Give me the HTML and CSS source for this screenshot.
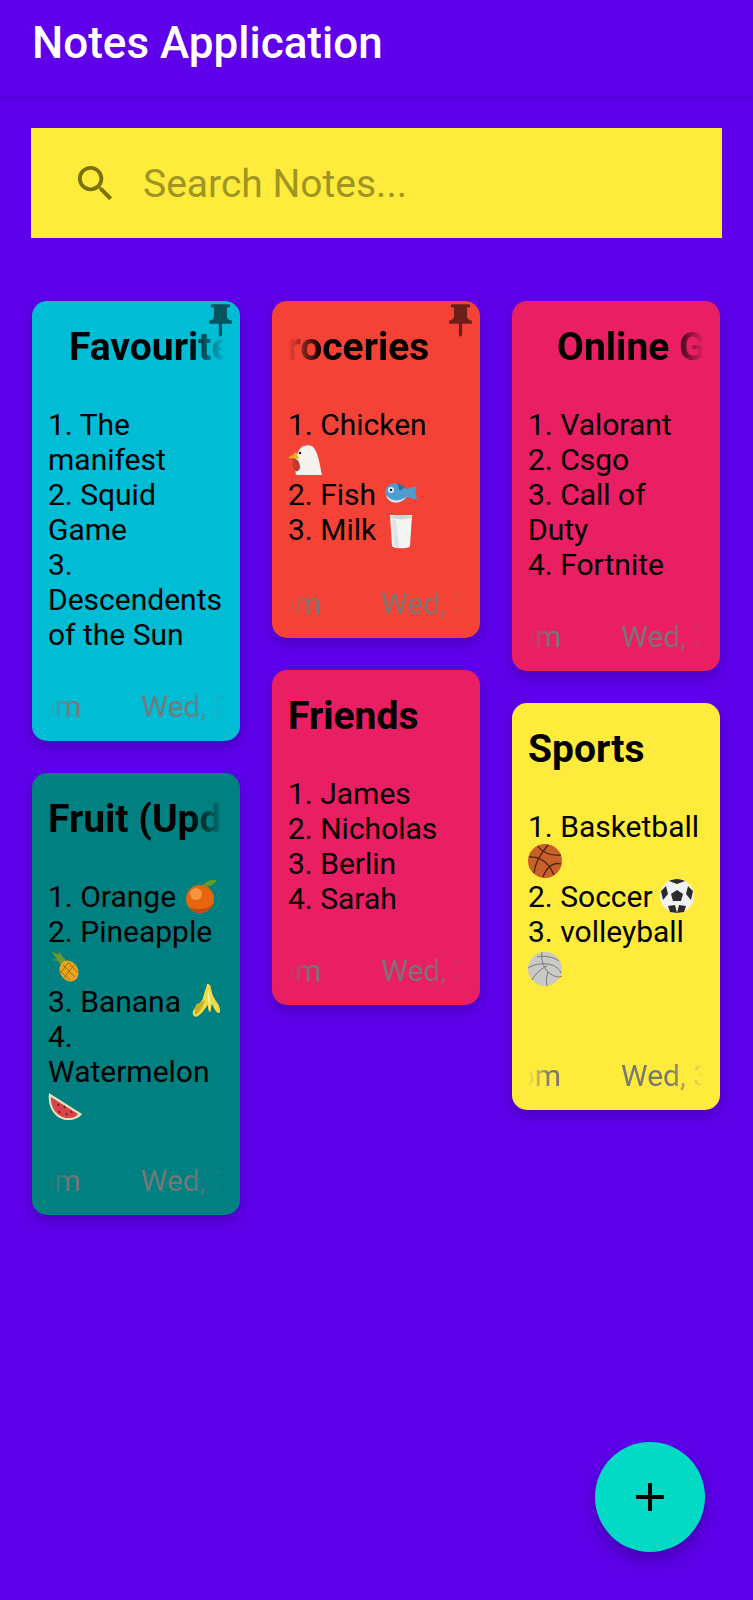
FILE: index.html
```html
<!DOCTYPE html>
<html>
<head>
	<title>Notes Application</title>
	<meta charset="utf-8">
	<link rel="stylesheet" href="styles.css">
</head>
<body>

	<header class="top-bar">
		<h1>Notes Application</h1>
	</header>

	<div class="search">
		<svg class="search-icon" viewBox="0 0 24 24"><path d="M15.5 14h-.79l-.28-.27C15.41 12.59 16 11.11 16 9.5 16 5.91 13.09 3 9.5 3S3 5.91 3 9.5 5.91 16 9.5 16c1.61 0 3.09-.59 4.23-1.57l.27.28v.79l5 4.99L20.49 19l-4.99-5zm-6 0C7.01 14 5 11.99 5 9.5S7.01 5 9.5 5 14 7.01 14 9.5 11.99 14 9.5 14z"/></svg>
		<span class="search-text">Search Notes...</span>
	</div>

	<main class="notes">

		<div class="col">
			<div class="card cyan">
				<svg class="pin" viewBox="0 0 24 24"><path d="M16 9V4h1c.55 0 1-.45 1-1s-.45-1-1-1H7c-.55 0-1 .45-1 1s.45 1 1 1h1v5c0 1.66-1.34 3-3 3v2h5.97v7l1 1 1-1v-7H19v-2c-1.66 0-3-1.34-3-3z"/></svg>
				<div class="title fade-right"><span class="in-21">Favourites</span></div>
				<p class="body">1. The manifest<br>2. Squid Game<br>3. Descendents of the Sun</p>
				<div class="foot"><span class="time"><span>7:30 pm</span></span><span class="date">Wed, 3 Nov</span></div>
			</div>

			<div class="card teal">
				<div class="title fade-right"><span>Fruit (Updated)</span></div>
				<p class="body">1. Orange
					<svg class="emo" viewBox="0 0 34 34"><path d="M18 8C20 3 26 0 33 1 30 6 24 9 18 8z" fill="#5f9a2c"/><circle cx="16" cy="20" r="14" fill="#e8650f"/><circle cx="12" cy="15" r="6" fill="#f6953f"/><path d="M16 34a14 14 0 0 0 13-9c-5 5-15 7-24 3a14 14 0 0 0 11 6z" fill="#c04c0a"/></svg><br>
					2. Pineapple
					<svg class="emo" viewBox="0 0 34 34"><path d="M3 2l8 4-1-5 5 7 3 3-5 5-3-4-6-1 5-1z" fill="#6d9a2a"/><ellipse cx="21" cy="22" rx="9" ry="11" transform="rotate(-32 21 22)" fill="#e8a51e"/><path d="M15 16l12 12M12 22l10 9M20 13l10 11M26 16L15 30M21 13L11 26" stroke="#a86c10" stroke-width="1"/></svg><br>
					3. Banana
					<svg class="emo" viewBox="0 0 34 34"><path d="M19 0c3 0 4 2 4 5 1 6 4 11 7 15 2 3 3 9 1 9-3 0-5-5-7-9-1 3-1 8-2 8-2-1-2-5-2-7-3 3-6 9-10 11-4 2-6-1-5-5 2-5 8-7 10-13 1-5 3-9 4-14z" fill="#f4d949"/><path d="M9 20c3-1 6-3 8-4-1 6-6 13-10 15 0-4-1-8 2-11z" fill="#c9b021"/><path d="M20 6c-1 6 0 14 2 20 0-6 0-14-2-20z" fill="#fff3a5"/></svg><br>
					4. Watermelon
					<svg class="emo low-2" viewBox="0 0 34 34"><path d="M1 1C-1 16 8 28 20 28 26 28 31 26 34 22Z" fill="#e9e4b8"/><path d="M3 5C2 16 10 26 20 26 25 26 28 25 30 22Z" fill="#d8434c"/><path d="M10 12l1 2M16 14l1 2M11 19l1 2M18 21l1 2M23 19l1 2" stroke="#5c1f1f" stroke-width="1.5"/></svg>
				</p>
				<div class="foot"><span class="time"><span>7:30 pm</span></span><span class="date">Wed, 3 Nov</span></div>
			</div>
		</div>

		<div class="col">
			<div class="card red">
				<svg class="pin" viewBox="0 0 24 24"><path d="M16 9V4h1c.55 0 1-.45 1-1s-.45-1-1-1H7c-.55 0-1 .45-1 1s.45 1 1 1h1v5c0 1.66-1.34 3-3 3v2h5.97v7l1 1 1-1v-7H19v-2c-1.66 0-3-1.34-3-3z"/></svg>
				<div class="title fade-left"><span class="out-end">Groceries</span></div>
				<p class="body">1. Chicken
					<svg class="emo" viewBox="0 0 34 34"><path d="M8 33C6 18 9 3 20 3 29 3 31 18 34 33Z" fill="#f6f3ee"/><path d="M0 16l8-6 3 7z" fill="#efae1b"/><path d="M5 17c4-1 7 3 7 9-1 4-5 4-6 1-1-2-2-6-1-10z" fill="#c23a2c"/><circle cx="12" cy="11" r="1.3" fill="#222"/><path d="M13 4l2-3 2 2 2-3 2 3 3 0" fill="#e8504a"/></svg><br>
					2. Fish
					<svg class="emo" viewBox="0 0 34 34"><path d="M1 15C2 6 13 3 22 12L33 9C31 13 31 19 34 23L23 20C16 28 2 25 1 15Z" fill="#4f9ccf"/><path d="M2 18C7 25 17 25 23 19 17 29 4 27 2 18Z" fill="#d8e6ef"/><circle cx="7" cy="13" r="3" fill="#e8eef2"/><circle cx="7" cy="13" r="1.3" fill="#1c2a36"/><path d="M13 6l8 4-5 4z" fill="#2c6ea3"/></svg><br>
					3. Milk
					<svg class="emo low-2" viewBox="0 0 34 34"><path d="M6 0h22l-2 31c0 3-17 3-18 0z" fill="#f3f5f4"/><ellipse cx="17" cy="2" rx="11" ry="2.2" fill="#cfd6d4"/><path d="M8 4l2 27c2 1 4 1 5 1L12 5z" fill="#dfe4e2"/></svg>
				</p>
				<div class="foot"><span class="time"><span>7:30 pm</span></span><span class="date">Wed, 3 Nov</span></div>
			</div>

			<div class="card pink">
				<div class="title"><span>Friends</span></div>
				<p class="body">1. James<br>2. Nicholas<br>3. Berlin<br>4. Sarah</p>
				<div class="foot"><span class="time"><span>7:30 pm</span></span><span class="date">Wed, 3 Nov</span></div>
			</div>
		</div>

		<div class="col">
			<div class="card pink">
				<div class="title fade-right"><span class="in-29">Online Games</span></div>
				<p class="body">1. Valorant<br>2. Csgo<br>3. Call of Duty<br>4. Fortnite</p>
				<div class="foot"><span class="time"><span>7:30 pm</span></span><span class="date">Wed, 3 Nov</span></div>
			</div>

			<div class="card yellow">
				<div class="title"><span>Sports</span></div>
				<p class="body">1. Basketball
					<svg class="emo" viewBox="0 0 34 34"><circle cx="17" cy="17" r="17" fill="#c9602a"/><path d="M1 13C9 12 20 16 26 31M10 2C14 9 24 12 33 11M20 1C14 8 7 18 6 29M33 20C26 18 19 22 15 33" fill="none" stroke="#4c2410" stroke-width="1.3"/></svg><br>
					2. Soccer
					<svg class="emo" viewBox="0 0 34 34"><circle cx="17" cy="17" r="17" fill="#f2f2f2"/><path d="M17 11l6 4-2 7h-8l-2-7zM17 0c3 0 6 1 8 2l-8 3-8-3c2-1 5-2 8-2zM1 12l5-5 2 8-5 6zM33 12l-5-5-2 8 5 6zM10 33l-2-6 7-1 2 8zM24 33l2-6-7-1-2 8z" fill="#2b2b2b"/></svg><br>
					3. volleyball
					<svg class="emo low-2" viewBox="0 0 34 34"><circle cx="17" cy="17" r="17" fill="#c9cac8"/><path d="M14 0C13 8 15 15 20 20 26 25 31 26 34 24M0 16C8 11 17 11 24 13 29 15 32 18 33 21M4 28C8 21 14 16 19 14M20 20C18 26 18 30 19 34M9 5C16 3 25 5 31 9" fill="none" stroke="#787a78" stroke-width="1"/></svg><br>
					<br>
				</p>
				<div class="foot"><span class="time"><span>7:30 pm</span></span><span class="date">Wed, 3 Nov</span></div>
			</div>
		</div>

	</main>

	<button class="fab"><svg viewBox="0 0 24 24"><path d="M19 13h-6v6h-2v-6H5v-2h6V5h2v6h6v2z"/></svg></button>

</body>
</html>
```

FILE: styles.css
```css
* {
	box-sizing: border-box;
}

html, body {
	height: 100%;
}

body {
	margin: 0;
	position: relative;
	overflow: hidden;
	background-color: #5e00ea;
	font-family: Roboto, "Noto Sans", sans-serif;
	color: black;
}

.top-bar {
	height: 96px;
	padding-left: 32px;
	display: flex;
	align-items: center;
	box-shadow: 0 2px 6px rgba(40, 0, 110, 0.2);
}

.top-bar h1 {
	margin: 0 0 11px;
	font-size: 44px;
	font-weight: 500;
	color: white;
}

.search {
	height: 110px;
	margin: 32px 31px 0;
	padding-left: 41px;
	display: flex;
	align-items: center;
	background-color: #ffeb3b;
}

.search-icon {
	width: 47px;
	height: 47px;
	fill: #7b7209;
}

.search-text {
	margin: 2px 0 0 24px;
	font-size: 39px;
	color: #a09522;
}

.notes {
	margin: 63px 33px 0 32px;
	display: flex;
	gap: 32px;
	align-items: flex-start;
}

.col {
	width: 208px;
	display: flex;
	flex-direction: column;
	gap: 32px;
}

.card {
	position: relative;
	padding: 19px 16px 17px;
	border-radius: 15px;
	box-shadow: 0 6px 12px rgba(30, 0, 90, 0.3);
}

.cyan {
	background-color: #00bcd4;
}

.red {
	background-color: #f44336;
}

.pink {
	background-color: #e91e63;
}

.teal {
	background-color: #008080;
}

.yellow {
	background-color: #ffeb3b;
}

.pin {
	position: absolute;
	top: 0;
	right: 0;
	width: 39px;
	height: 39px;
	fill: rgba(0, 0, 0, 0.55);
}

.title {
	height: 54px;
	line-height: 54px;
	overflow: hidden;
	white-space: nowrap;
	font-size: 39px;
	font-weight: 700;
}

.title span {
	display: inline-block;
}

.in-21 {
	margin-left: 21px;
}

.in-29 {
	margin-left: 29px;
}

.out-end {
	margin-left: -28px;
}

.fade-right {
	mask-image: linear-gradient(to right, #000 calc(100% - 34px), transparent);
}

.fade-left {
	mask-image: linear-gradient(to right, transparent, #000 34px);
}

.body {
	margin: 33px 0 0;
	font-size: 30px;
	line-height: 35px;
}

.emo {
	width: 34px;
	height: 34px;
	vertical-align: -6px;
}

.low-2 {
	vertical-align: -9px;
}

.foot {
	height: 35px;
	margin-top: 37px;
	display: flex;
	justify-content: space-between;
	font-size: 30px;
	line-height: 35px;
	white-space: nowrap;
	color: #777;
}

.time {
	width: 33px;
	display: flex;
	justify-content: flex-end;
	overflow: hidden;
	mask-image: linear-gradient(to right, transparent, #000 22px);
}

.date {
	width: 83px;
	overflow: hidden;
	mask-image: linear-gradient(to right, #000 calc(100% - 34px), transparent);
}

.fab {
	position: absolute;
	right: 48px;
	bottom: 48px;
	width: 110px;
	height: 110px;
	padding: 0;
	display: flex;
	align-items: center;
	justify-content: center;
	border: none;
	border-radius: 50%;
	background-color: #03dac5;
	box-shadow: 0 8px 16px rgba(30, 0, 90, 0.4);
}

.fab svg {
	width: 48px;
	height: 48px;
	fill: black;
}
```
